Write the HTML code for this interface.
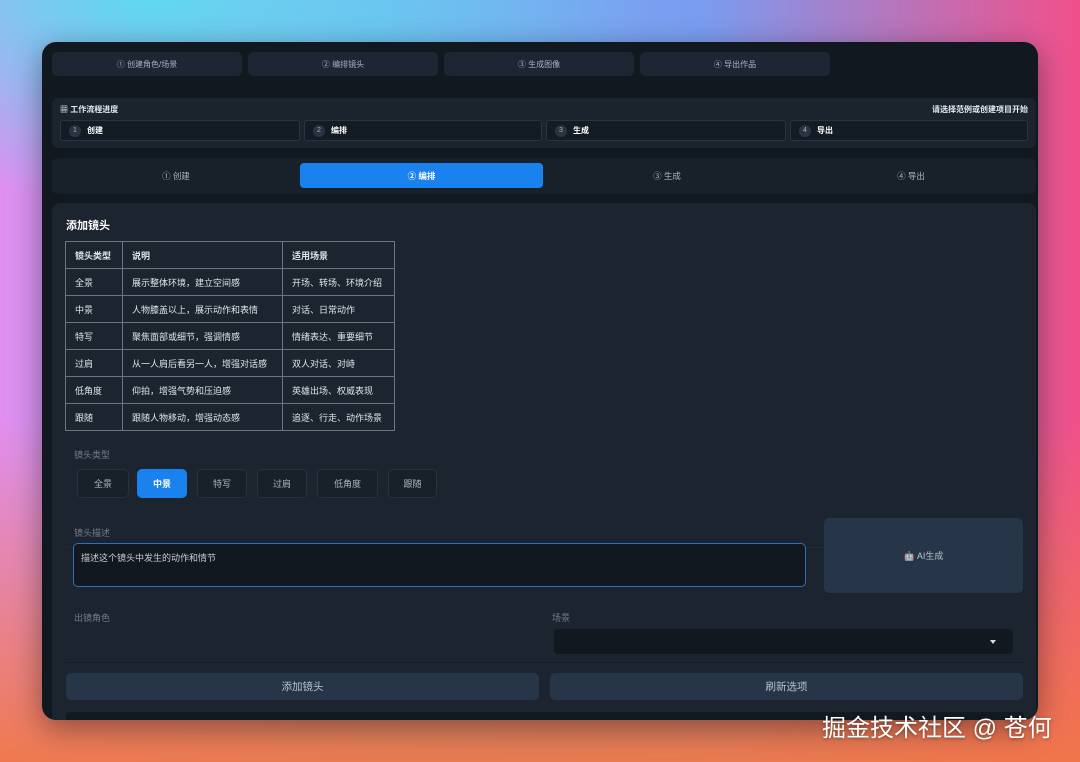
<!DOCTYPE html>
<html><head><meta charset="utf-8"><style>
*{box-sizing:border-box;margin:0;padding:0}
body{width:1080px;height:762px;overflow:hidden;position:relative;font-family:"Liberation Sans","Noto Sans CJK SC",sans-serif;
background:
radial-gradient(ellipse 500px 200px at 150px 0px,rgba(90,220,240,.95),rgba(90,220,240,0)),
linear-gradient(180deg,rgba(0,0,0,0) 55%,rgba(240,120,70,.95) 100%),
linear-gradient(90deg,#e08ef0 0%,#7ab0f0 35%,#7a9cf0 65%,#f0508a 100%);}
.a{position:absolute}
.win{left:42px;top:42px;width:996px;height:678px;border-radius:14px;background:#111820;overflow:hidden;box-shadow:0 8px 30px rgba(0,0,0,.4)}
.tb{top:10px;height:24px;border-radius:5px;background:#1d2632;color:#aab4c0;font-size:8px;display:flex;align-items:center;justify-content:center}
.t{font-size:8px;color:#e6ebf0}
.step{top:78px;height:21px;border:1px solid #2a3441;border-radius:3px;background:#131b24;display:flex;align-items:center;padding-left:8px;font-size:8px;color:#fff;font-weight:bold}
.step i{width:12px;height:12px;border-radius:6px;background:#2a3441;color:#aab;font-style:normal;font-size:7px;font-weight:normal;display:inline-flex;align-items:center;justify-content:center;margin-right:6px}
.tab{top:121px;height:25px;display:flex;align-items:center;justify-content:center;font-size:8.5px;color:#aab4c0;border-radius:4px}
table{border-collapse:collapse;font-size:9px;color:#dfe5ea}
td{border:1px solid #6c747e;height:27px;padding:0 9px;white-space:nowrap}
.chip{top:427px;height:29px;border:1px solid #28313c;border-radius:5px;background:#18202a;color:#aab4c0;font-size:9px;display:flex;align-items:center;justify-content:center}
.lbl{font-size:9px;color:#737d88}
.btn{height:27px;border-radius:5px;background:#263548;color:#b8c2cc;font-size:10.5px;display:flex;align-items:center;justify-content:center}
</style></head><body>
<div class="a win">
 <div class="a tb" style="left:10px;width:190px">① 创建角色/场景</div>
 <div class="a tb" style="left:206px;width:190px">② 编排镜头</div>
 <div class="a tb" style="left:402px;width:190px">③ 生成图像</div>
 <div class="a tb" style="left:598px;width:190px">④ 导出作品</div>
 <div class="a" style="left:10px;top:56px;width:984px;height:50px;background:#1b232e;border-radius:6px"></div>
 <div class="a t" style="left:18px;top:62px;font-weight:bold">▦ 工作流程进度</div>
 <div class="a t" style="right:10px;top:62px;font-weight:bold">请选择范例或创建项目开始</div>
 <div class="a step" style="left:18px;width:240px"><i>1</i>创建</div>
 <div class="a step" style="left:262px;width:238px"><i>2</i>编排</div>
 <div class="a step" style="left:504px;width:240px"><i>3</i>生成</div>
 <div class="a step" style="left:748px;width:238px"><i>4</i>导出</div>
 <div class="a" style="left:10px;top:116px;width:984px;height:36px;background:#18202a;border-radius:6px"></div>
 <div class="a tab" style="left:14px;width:240px">① 创建</div>
 <div class="a tab" style="left:258px;width:243px;background:#1a82ee;color:#fff;font-weight:bold">② 编排</div>
 <div class="a tab" style="left:505px;width:240px">③ 生成</div>
 <div class="a tab" style="left:749px;width:240px">④ 导出</div>
 <div class="a" style="left:10px;top:161px;width:984px;height:530px;background:#1c242f;border-radius:8px"></div>
 <div class="a" style="left:24px;top:175px;font-size:11px;font-weight:bold;color:#fff">添加镜头</div>
 <table class="a" style="left:23px;top:199px;width:330px">
  <tr><td style="width:57px;font-weight:bold">镜头类型</td><td style="width:160px;font-weight:bold">说明</td><td style="font-weight:bold">适用场景</td></tr>
  <tr><td>全景</td><td>展示整体环境，建立空间感</td><td>开场、转场、环境介绍</td></tr>
  <tr><td>中景</td><td>人物膝盖以上，展示动作和表情</td><td>对话、日常动作</td></tr>
  <tr><td>特写</td><td>聚焦面部或细节，强调情感</td><td>情绪表达、重要细节</td></tr>
  <tr><td>过肩</td><td>从一人肩后看另一人，增强对话感</td><td>双人对话、对峙</td></tr>
  <tr><td>低角度</td><td>仰拍，增强气势和压迫感</td><td>英雄出场、权威表现</td></tr>
  <tr><td>跟随</td><td>跟随人物移动，增强动态感</td><td>追逐、行走、动作场景</td></tr>
 </table>
 <div class="a" style="left:24px;top:396px;width:958px;height:110px;border-bottom:1px solid #222b36"></div>
 <div class="a lbl" style="left:32px;top:406px">镜头类型</div>
 <div class="a chip" style="left:35px;width:52px">全景</div>
 <div class="a chip" style="left:95px;width:50px;background:#1a82ee;color:#fff;border-color:#1a82ee;font-weight:bold">中景</div>
 <div class="a chip" style="left:155px;width:50px">特写</div>
 <div class="a chip" style="left:215px;width:50px">过肩</div>
 <div class="a chip" style="left:275px;width:61px">低角度</div>
 <div class="a chip" style="left:346px;width:49px">跟随</div>
 <div class="a lbl" style="left:32px;top:484px">镜头描述</div>
 <div class="a" style="left:31px;top:501px;width:733px;height:44px;border:1px solid #2e6fb8;border-radius:5px;background:#111820;color:#c5ccd4;font-size:9px;padding:7px 7px">描述这个镜头中发生的动作和情节</div>
 <div class="a" style="left:782px;top:476px;width:199px;height:75px;border-radius:5px;background:#263548;color:#b8c2cc;font-size:9px;display:flex;align-items:center;justify-content:center">🤖 AI生成</div>
 <div class="a lbl" style="left:32px;top:569px">出镜角色</div>
 <div class="a lbl" style="left:510px;top:569px">场景</div>
 <div class="a" style="left:512px;top:587px;width:459px;height:25px;border-radius:4px;background:#111820"></div>
 <div class="a" style="left:948px;top:598px;border-left:3px solid transparent;border-right:3px solid transparent;border-top:4px solid #ddd"></div>
 <div class="a" style="left:24px;top:620px;width:958px;height:1px;background:#161d26"></div>
 <div class="a btn" style="left:24px;top:631px;width:473px">添加镜头</div>
 <div class="a btn" style="left:508px;top:631px;width:473px">刷新选项</div>
 <div class="a" style="left:24px;top:670px;width:958px;height:20px;background:#121921;border-radius:4px"></div>
</div>
<div class="a" style="left:822px;top:708px;font-size:24px;color:#fff;text-shadow:0 1px 3px rgba(0,0,0,.4)">掘金技术社区 @ 苍何</div>
</body></html>
